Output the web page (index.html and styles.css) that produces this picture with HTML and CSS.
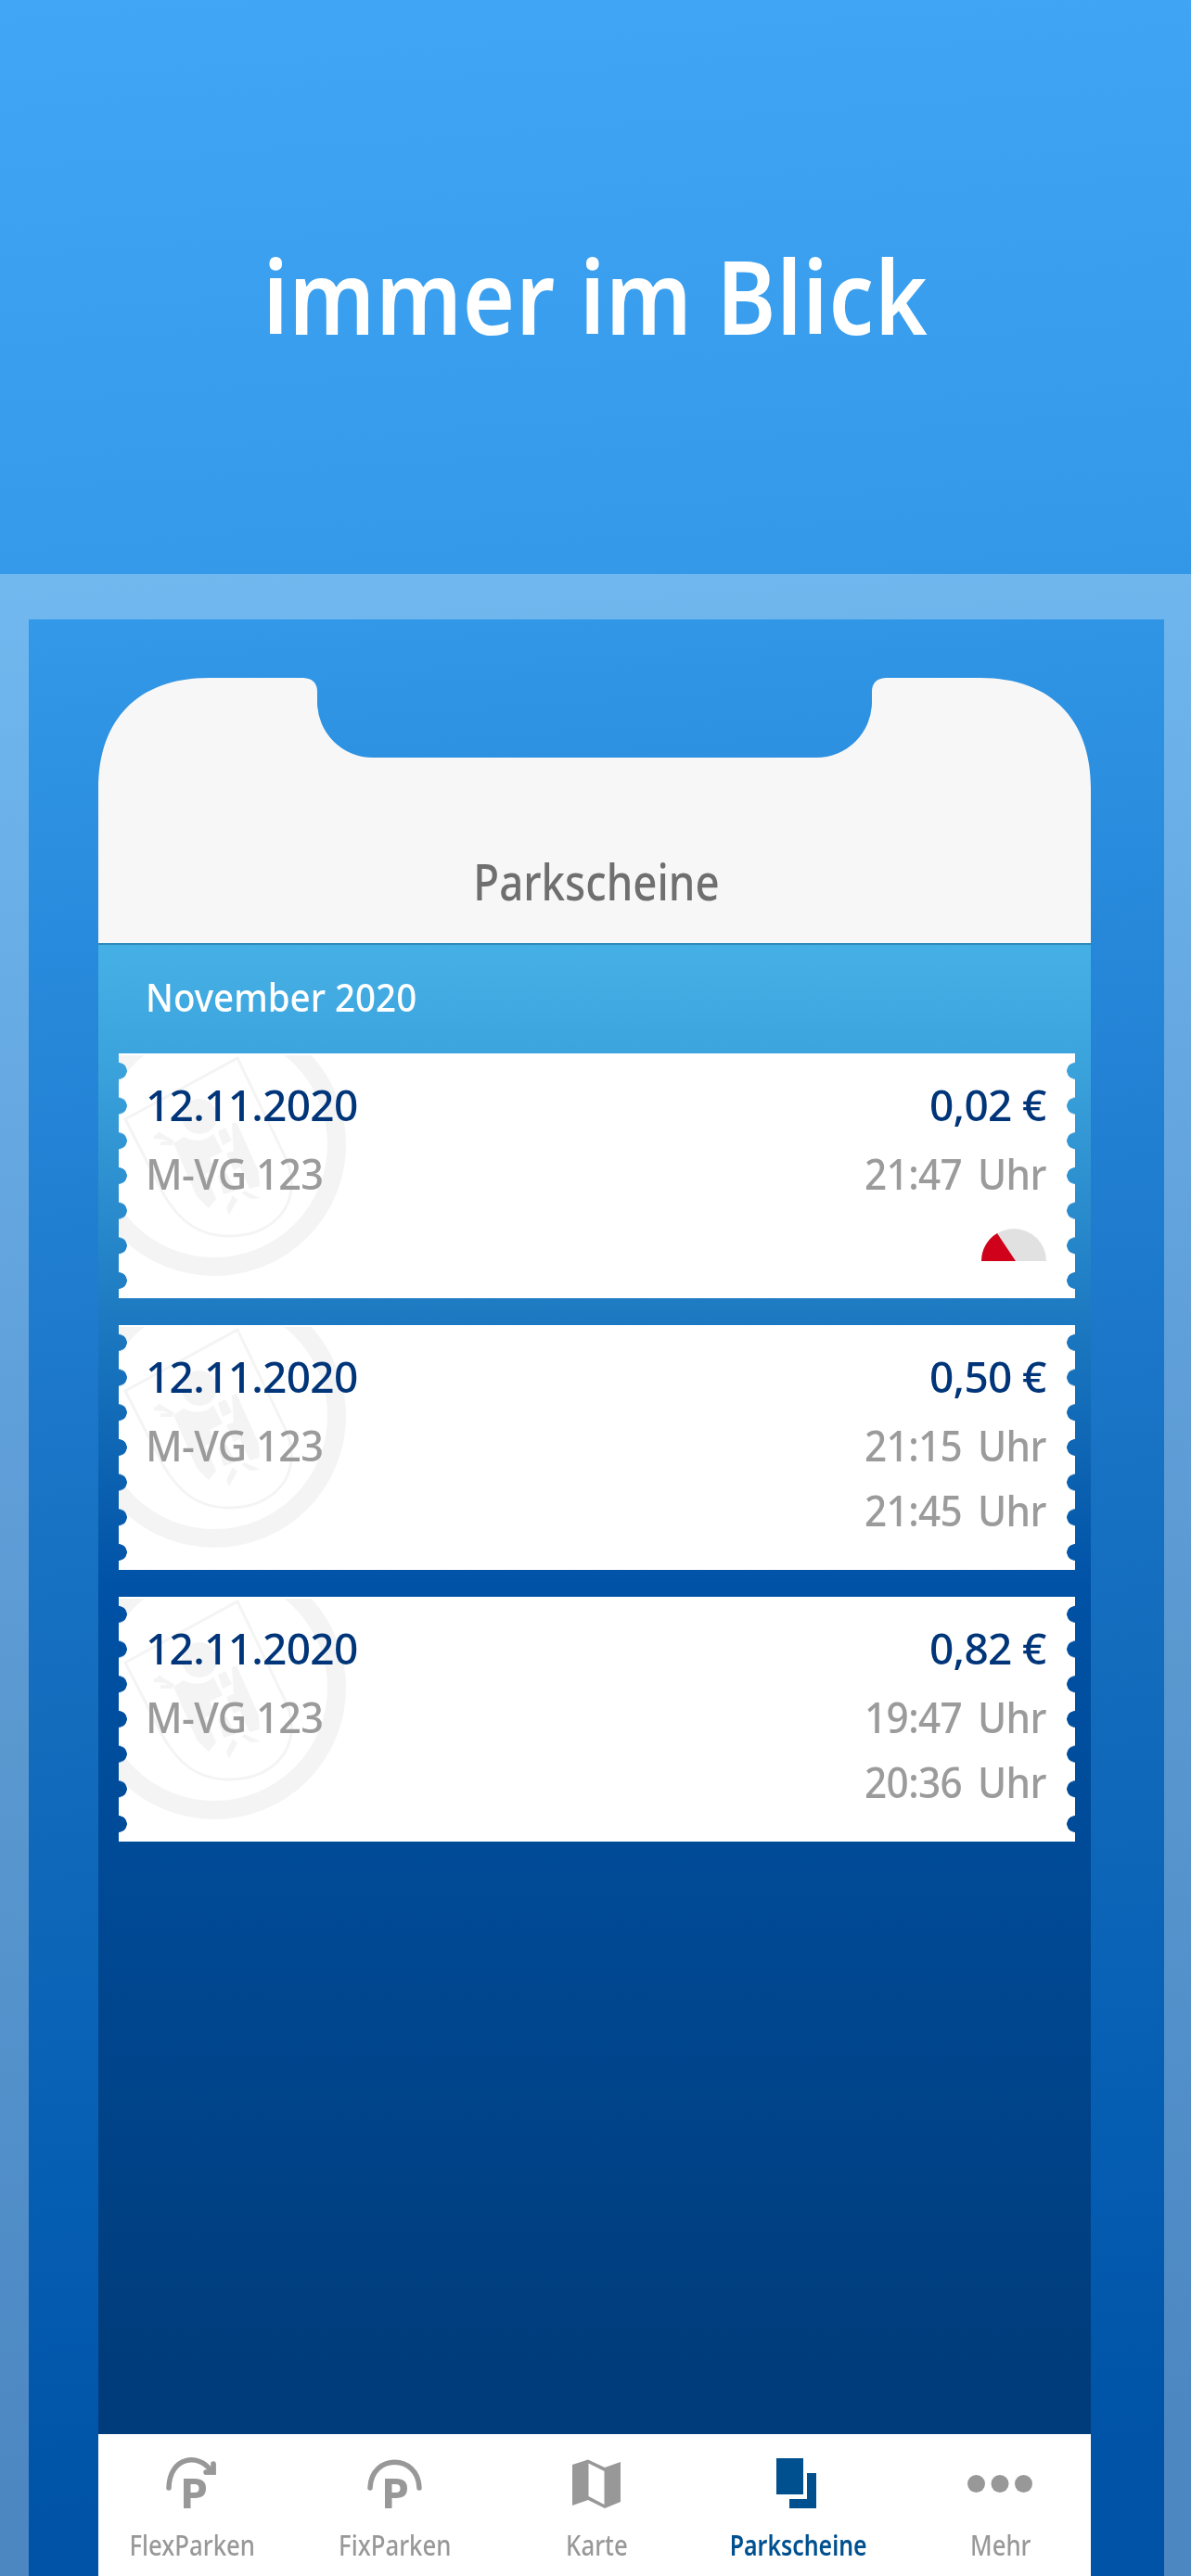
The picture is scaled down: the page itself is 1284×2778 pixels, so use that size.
FILE: index.html
```html
<!DOCTYPE html>
<html lang="de">
<head>
    <meta charset="UTF-8">
    <meta name="viewport" content="width=device-width, initial-scale=1.0">
    <title>Parkscheine</title>
    <link rel="stylesheet" href="styles.css">
</head>
<body>

<svg class="symbols" width="0" height="0">
    <symbol id="wappen" viewBox="0 2 250 250">
        <circle cx="103" cy="98" r="132" fill="none" stroke="#f4f4f4" stroke-width="20"/>
        <path d="M7 71 L128 5 L181 115 C199 160 169 197 119 197 C82 197 63 176 49 153 Z" fill="none" stroke="#f4f4f4" stroke-width="3"/>
        <circle cx="87" cy="68" r="19" fill="#f4f4f4"/>
        <path d="M59 97 L70 90 Q88 99 102 87 L112 106 L98 113 L104 126 L93 130 L105 157 L97 167 L84 154 Z" fill="#f4f4f4"/>
        <path d="M107 84 L115 80 L122 94 L112 99 Z M116 108 L123 105 L132 122 L124 126 Z M107 132 L116 129 L126 148 L113 152 Z M122 76 L127 74 L151 128 L152 143 L141 146 L124 108 Z" fill="#f4f4f4"/>
        <path d="M59 96 L50 91 L38 90 M58 97 L45 97 M51 92 L42 86" stroke="#f4f4f4" stroke-width="4" fill="none"/>
        <path d="M123 153 L128 158 L119 174 L116 167 Z M135 148 L153 156 L142 157 L133 151 Z" fill="#f4f4f4"/>
    </symbol>
</svg>

<h1>immer im Blick</h1>

<div class="rahmen">
    <div class="phone">
        <header class="kopf">
            <svg class="form" viewBox="0 0 1070 286">
                <path d="M0 286 V119 C0 44 44 0 119 0 H221 Q236 1 236 15 V26 A60 60 0 0 0 296 86 H774 A60 60 0 0 0 834 26 V15 Q834 1 849 0 H951 C1026 0 1070 44 1070 119 V286 Z" fill="#f7f7f7"/>
            </svg>
            <h2>Parkscheine</h2>
        </header>

        <main class="liste">
            <h3>November 2020</h3>

            <div class="ticket">
                <svg class="wappen"><use href="#wappen"/></svg>
                <div class="zeile preis"><span>12.11.2020</span><span>0,02 €</span></div>
                <div class="zeile"><span class="kfz">M-VG 123</span><span class="zeit">21:47 Uhr</span></div>
                <svg class="uhr" viewBox="0 0 70 35">
                    <path d="M0 35 A35 35 0 0 1 70 35 Z" fill="#e1e1e1"/>
                    <path d="M0 35 A35 35 0 0 1 17 5 L37 35 Z" fill="#d0021b"/>
                </svg>
            </div>

            <div class="ticket">
                <svg class="wappen"><use href="#wappen"/></svg>
                <div class="zeile preis"><span>12.11.2020</span><span>0,50 €</span></div>
                <div class="zeile"><span class="kfz">M-VG 123</span><span class="zeit">21:15 Uhr</span></div>
                <div class="zeile ende"><span class="zeit">21:45 Uhr</span></div>
            </div>

            <div class="ticket">
                <svg class="wappen"><use href="#wappen"/></svg>
                <div class="zeile preis"><span>12.11.2020</span><span>0,82 €</span></div>
                <div class="zeile"><span class="kfz">M-VG 123</span><span class="zeit">19:47 Uhr</span></div>
                <div class="zeile ende"><span class="zeit">20:36 Uhr</span></div>
            </div>
        </main>

        <nav class="tabs">
            <a class="tab">
                <svg viewBox="0 0 60 60">
                    <path d="M4 34 C5 -1 37 -3 49 15" fill="none" stroke="currentColor" stroke-width="5.5" stroke-linecap="round"/>
                    <path d="M52 8 V17 H44" fill="none" stroke="currentColor" stroke-width="5.5" stroke-linecap="round"/>
                    <path d="M42 19.700 H54.700 V8 Z" fill="currentColor"/>
                    <path fill-rule="evenodd" d="M20 24 H32 Q44 24 44 34.500 Q44 45 32 45 H27.500 V56 H20 Z M27.500 30 V39 H32 Q36.500 39 36.500 34.500 Q36.500 30 32 30 Z" fill="currentColor"/>
                </svg>
                <span>FlexParken</span>
            </a>
            <a class="tab">
                <svg viewBox="0 0 60 60">
                    <path d="M4 34 C5 -3 56 -3 57 34" fill="none" stroke="currentColor" stroke-width="5.5" stroke-linecap="round"/>
                    <path fill-rule="evenodd" d="M20 24 H32 Q44 24 44 34.500 Q44 45 32 45 H27.500 V56 H20 Z M27.500 30 V39 H32 Q36.500 39 36.500 34.500 Q36.500 30 32 30 Z" fill="currentColor"/>
                </svg>
                <span>FixParken</span>
            </a>
            <a class="tab">
                <svg viewBox="0 0 60 60">
                    <path fill-rule="evenodd" d="M4 9 L21 3.500 L39 12 L56 6 V49 L39 56 L21 47 L4 53 Z M21.500 7.500 V43 L38.500 52 V16 Z" fill="currentColor"/>
                </svg>
                <span>Karte</span>
            </a>
            <a class="tab aktiv">
                <svg viewBox="0 0 60 60">
                    <path d="M6 2 H35 V41 H6 Z M39 18 H49 V56 H20 V46 H39 Z" fill="currentColor"/>
                </svg>
                <span>Parkscheine</span>
            </a>
            <a class="tab">
                <svg class="punkte" viewBox="0 0 72 60">
                    <circle cx="10.500" cy="29.500" r="9.500" fill="currentColor"/>
                    <circle cx="36" cy="29.500" r="9.500" fill="currentColor"/>
                    <circle cx="61.500" cy="29.500" r="9.500" fill="currentColor"/>
                </svg>
                <span>Mehr</span>
            </a>
        </nav>
    </div>
</div>

</body>
</html>
```
FILE: styles.css
```css
* {
    box-sizing: border-box;
}
body {
    margin: 0;
    height: 2778px;
    overflow: hidden;
    display: flex;
    flex-direction: column;
    font-family: "Noto Sans", "Open Sans", sans-serif;
    background: linear-gradient(176deg, #41a6f5 0%, #3399e8 23%, #2788da 38%, #1b76c9 54%, #136cbc 65%, #0760b4 80%, #0053a7 95%);
}
h1, h2, h3 {
    margin: 0;
}
.symbols {
    position: absolute;
}
h1 {
    height: 619px;
    padding-top: 243px;
    font-size: 111px;
    line-height: 150px;
    font-weight: 650;
    letter-spacing: 1px;
    text-align: center;
    color: white;
    transform: scaleX(0.87);
}
.rahmen {
    flex: 1;
    border: solid rgba(255, 255, 255, 0.3);
    border-width: 49px 29px 0 31px;
    padding: 63px 79px 0 75px;
}
.phone {
    height: 2047px;
    display: flex;
    flex-direction: column;
}
.kopf {
    position: relative;
    height: 286px;
}
.form {
    display: block;
    width: 1070px;
    height: 286px;
}
h2 {
    position: absolute;
    left: 4px;
    right: 0;
    top: 184px;
    font-size: 54px;
    line-height: 70px;
    font-weight: 550;
    text-align: center;
    color: #6f6f6f;
    transform: scaleX(0.845);
}
.liste {
    height: 1608px;
    padding: 24px 16.5px 0 22px;
    display: flex;
    flex-direction: column;
    gap: 29px;
    border-top: 2px solid #2d8ab9;
    background: linear-gradient(180deg, #45b0e6 0%, #3ba3dc 8%, #1b77c0 26%, #0052a6 43%, #003c7b 96%, #003c7b 100%);
}
h3 {
    height: 64px;
    padding-left: 29px;
    font-size: 42.5px;
    line-height: 64px;
    font-weight: 500;
    color: white;
    transform: scaleX(0.907);
    transform-origin: 29px 0;
}
.ticket {
    position: relative;
    height: 264px;
    padding: 19px 32px 0 29px;
    background: white;
    font-size: 46px;
    color: #9b9b9b;
    -webkit-mask: radial-gradient(circle at 0 50%, transparent 8.5px, #000 9px) left top / 51% 37.7px repeat-y,
        radial-gradient(circle at 100% 50%, transparent 8.5px, #000 9px) right top / 51% 37.7px repeat-y;
}
.wappen {
    position: absolute;
    left: 0;
    top: 2px;
    width: 250px;
    height: 250px;
}
.zeile {
    position: relative;
    display: flex;
    justify-content: space-between;
    height: 70px;
    line-height: 72px;
    letter-spacing: -0.7px;
}
.preis {
    height: 74px;
    line-height: 72px;
    font-weight: 500;
    color: #003579;
}
.ende {
    justify-content: flex-end;
}
.kfz {
    font-weight: 500;
    transform: scaleX(0.94);
    transform-origin: left;
}
.zeit {
    font-weight: 500;
    word-spacing: 7px;
    transform: scaleX(0.92);
    transform-origin: right;
}
.uhr {
    display: block;
    width: 70px;
    height: 35px;
    margin: 26px 0 0 auto;
}
.tabs {
    height: 153px;
    padding-left: 4px;
    display: flex;
    justify-content: center;
    background: white;
    color: #989898;
}
.tab {
    flex: 0 0 217.7px;
    display: flex;
    flex-direction: column;
    align-items: center;
    padding-top: 24px;
    font-size: 30.5px;
}
.tab svg {
    width: 60px;
    height: 60px;
}
.tab .punkte {
    width: 72px;
}
.tab span {
    margin-top: 14px;
    line-height: 42px;
    font-weight: 500;
    transform: scaleX(0.845);
}
.aktiv {
    color: #00508f;
}
.tab.aktiv span {
    font-weight: 600;
    transform: scaleX(0.815);
}
```
